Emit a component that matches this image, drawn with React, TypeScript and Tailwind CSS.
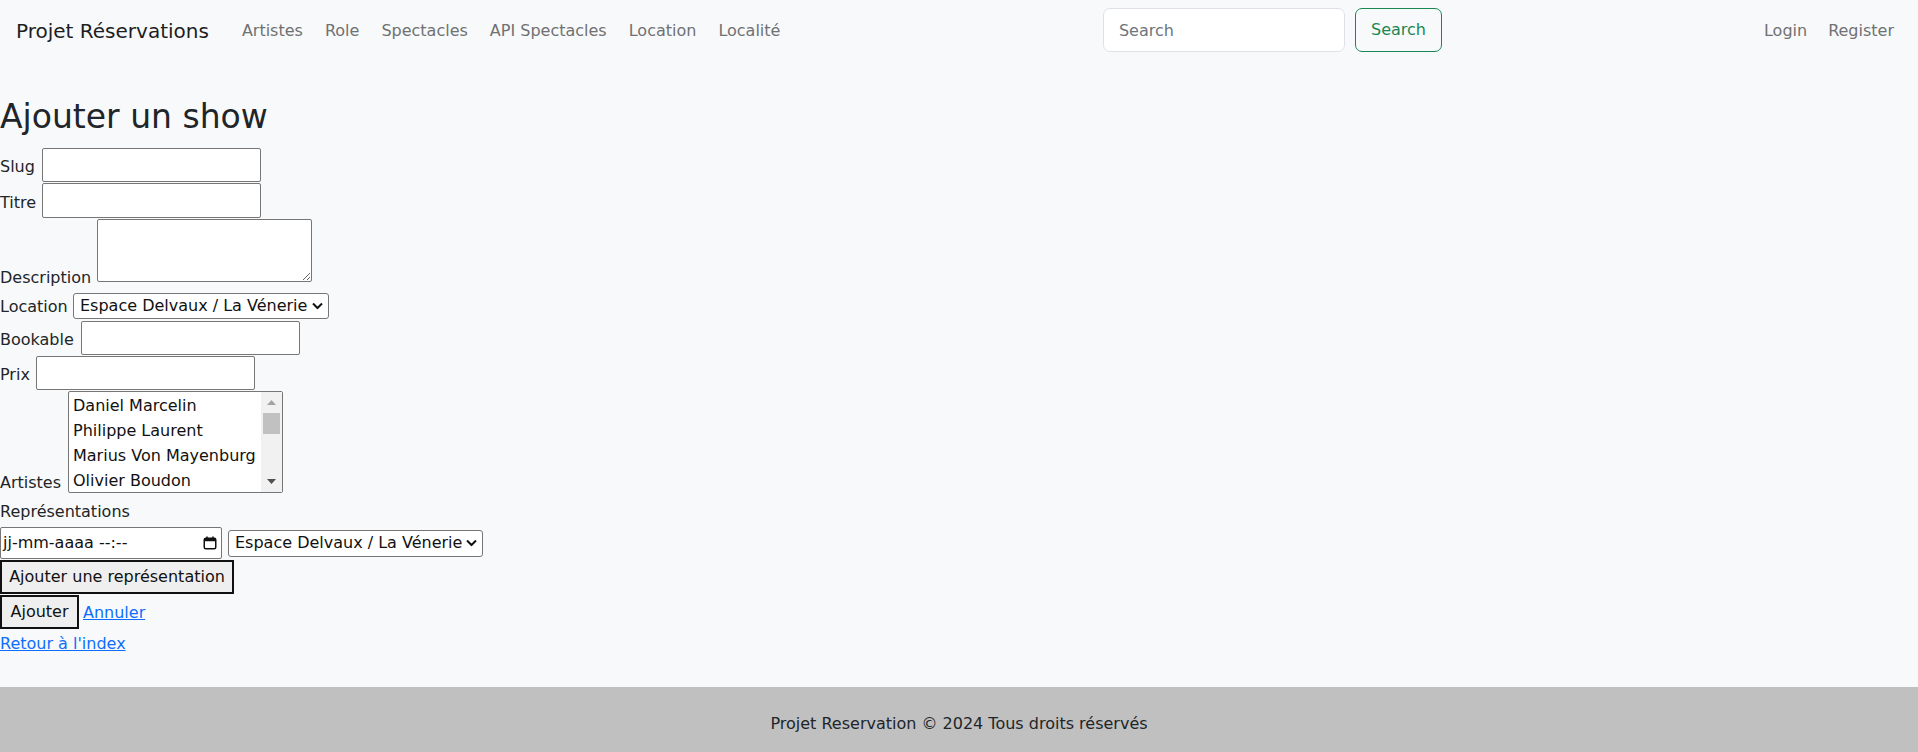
import { ReactNode } from "react";

const navLinks = ["Artistes", "Role", "Spectacles", "API Spectacles", "Location", "Localité"];

// seules les 4 premières options sont visibles dans la liste
const artistes = ["Daniel Marcelin", "Philippe Laurent", "Marius Von Mayenburg", "Olivier Boudon"];

// select natif sans apparence + chevron dessiné
function Select({ width, height }: { width: string; height: string }) {
  return (
    <span className={`relative inline-block ${width} ${height}`}>
      <select className="appearance-none w-full h-full bg-white border border-[#767676] rounded-[3px] pl-[6px] pr-[20px] text-[16px] leading-[24px] text-[#111]">
        <option>Espace Delvaux / La Vénerie</option>
      </select>
      <svg
        className="absolute right-[6px] top-1/2 -translate-y-1/2 pointer-events-none"
        width="11"
        height="7"
        viewBox="0 0 11 7"
      >
        <polyline points="1,1 5.5,5.5 10,1" fill="none" stroke="#111" strokeWidth="2" />
      </svg>
    </span>
  );
}

function Row({ label, labelW, pb, mt, children }: { label: string; labelW: string; pb: string; mt: string; children: ReactNode }) {
  return (
    <div className={`flex items-end ${mt}`}>
      <label className={`inline-block leading-[24px] ${labelW} ${pb}`}>{label}</label>
      {children}
    </div>
  );
}

function TextInput({ h = "h-[34px]" }: { h?: string }) {
  return <input type="text" className={`w-[219px] ${h} bg-white border border-[#767676] rounded-[2px] px-[2px]`} />;
}

export default function App() {
  return (
    <div className="min-h-screen flex flex-col bg-[#f8f9fa] text-[#212529] text-[16px] font-['DejaVu_Sans',sans-serif]">
      <nav className="h-[60px] flex items-center pl-[16px] pr-[24px]">
        <div className="flex-1 flex items-center pt-[2px]">
          <span className="text-[20px] leading-[30px] text-[#1d1e1f] mr-[33px]">Projet Réservations</span>
          <ul className="flex gap-[22px] text-[#707172] leading-[24px]">
            {navLinks.map((l) => (
              <li key={l}>{l}</li>
            ))}
          </ul>
        </div>
        <form className="flex gap-[10px]">
          <input
            type="search"
            placeholder="Search"
            className="w-[242px] h-[44px] bg-white border border-[#dee2e6] rounded-[7px] px-[15px] placeholder:text-[#6c757d]"
          />
          <button type="button" className="w-[87px] h-[44px] border border-[#198754] rounded-[7px] text-[#198754]">
            Search
          </button>
        </form>
        <div className="ml-[322px] pt-[2px] flex gap-[21px] text-[#707172] leading-[24px]">
          <span>Login</span>
          <span>Register</span>
        </div>
      </nav>

      <main className="flex-1">
        <h1 className="text-[33px] leading-[40px] mt-[37px]">Ajouter un show</h1>

        <Row label="Slug" labelW="w-[42px]" pb="pb-[3px]" mt="mt-[11px]">
          <TextInput />
        </Row>
        <Row label="Titre" labelW="w-[42px]" pb="pb-[3px]" mt="mt-[1px]">
          <TextInput h="h-[35px]" />
        </Row>
        <Row label="Description" labelW="w-[97px]" pb="pb-0" mt="mt-[1px]">
          <textarea className="w-[215px] h-[63px] mb-[8px] bg-white border border-[#767676] rounded-[2px]" />
        </Row>
        <Row label="Location" labelW="w-[73px]" pb="pb-0" mt="mt-[3px]">
          <Select width="w-[256px]" height="h-[26px]" />
        </Row>
        <Row label="Bookable" labelW="w-[81px]" pb="pb-[3px]" mt="mt-[2px]">
          <TextInput />
        </Row>
        <Row label="Prix" labelW="w-[36px]" pb="pb-[3px]" mt="mt-[1px]">
          <TextInput />
        </Row>
        <Row label="Artistes" labelW="w-[68px]" pb="-mb-[2px]" mt="mt-[1px]">
          <div className="w-[215px] h-[102px] flex bg-white border border-[#767676] rounded-[2px]">
            <div className="flex-1 overflow-hidden pl-[4px] pt-[2px]">
              {artistes.map((a) => (
                <div key={a} className="h-[25px] leading-[24px] whitespace-nowrap text-[#111]">
                  {a}
                </div>
              ))}
            </div>
            <div className="w-[21px] flex flex-col bg-[#f1f1f1]">
              <div className="h-[21px] flex items-center justify-center">
                <svg width="9" height="5" viewBox="0 0 9 5">
                  <polygon points="0,5 4.5,0 9,5" fill="#a3a3a3" />
                </svg>
              </div>
              <div className="h-[21px] mx-[2px] bg-[#c1c1c1]" />
              <div className="flex-1" />
              <div className="h-[21px] flex items-center justify-center">
                <svg width="9" height="5" viewBox="0 0 9 5">
                  <polygon points="0,0 4.5,5 9,0" fill="#505050" />
                </svg>
              </div>
            </div>
          </div>
        </Row>

        <div className="mt-[7px] leading-[24px]">Représentations</div>
        <div className="mt-[3px] flex items-center gap-[6px]">
          <div className="w-[222px] h-[32px] flex items-center justify-between bg-white border border-[#767676] rounded-[2px] pl-[2px] pr-[4px] leading-[24px] text-[#111]">
            <span>jj-mm-aaaa --:--</span>
            <svg width="14" height="14" viewBox="0 0 14 14">
              <rect x="1.25" y="2.25" width="11.5" height="10.5" rx="1.5" fill="none" stroke="#111" strokeWidth="1.5" />
              <rect x="1.25" y="2.25" width="11.5" height="3" fill="#111" />
              <line x1="4" y1="0.5" x2="4" y2="3" stroke="#111" strokeWidth="1.5" />
              <line x1="10" y1="0.5" x2="10" y2="3" stroke="#111" strokeWidth="1.5" />
            </svg>
          </div>
          <Select width="w-[255px]" height="h-[27px]" />
        </div>
        <button type="button" className="mt-[1px] block w-[234px] h-[34px] bg-[#efefef] border-2 border-[#111] text-[#111] leading-[24px]">
          Ajouter une représentation
        </button>
        <div className="mt-[1px] flex items-end gap-[4px]">
          <button type="button" className="w-[79px] h-[34px] bg-[#efefef] border-2 border-[#111] text-[#111] leading-[24px]">
            Ajouter
          </button>
          <a href="#" className="leading-[24px] pb-[4px] text-[#0d6efd] underline">
            Annuler
          </a>
        </div>
        <div className="mt-[3px] leading-[24px]">
          <a href="#" className="text-[#0d6efd] underline">
            Retour à l'index
          </a>
        </div>
      </main>

      <footer className="h-[65px] flex items-center justify-center pt-[9px] bg-[#c0c0c0] leading-[24px]">
        Projet Reservation © 2024 Tous droits réservés
      </footer>
    </div>
  );
}
